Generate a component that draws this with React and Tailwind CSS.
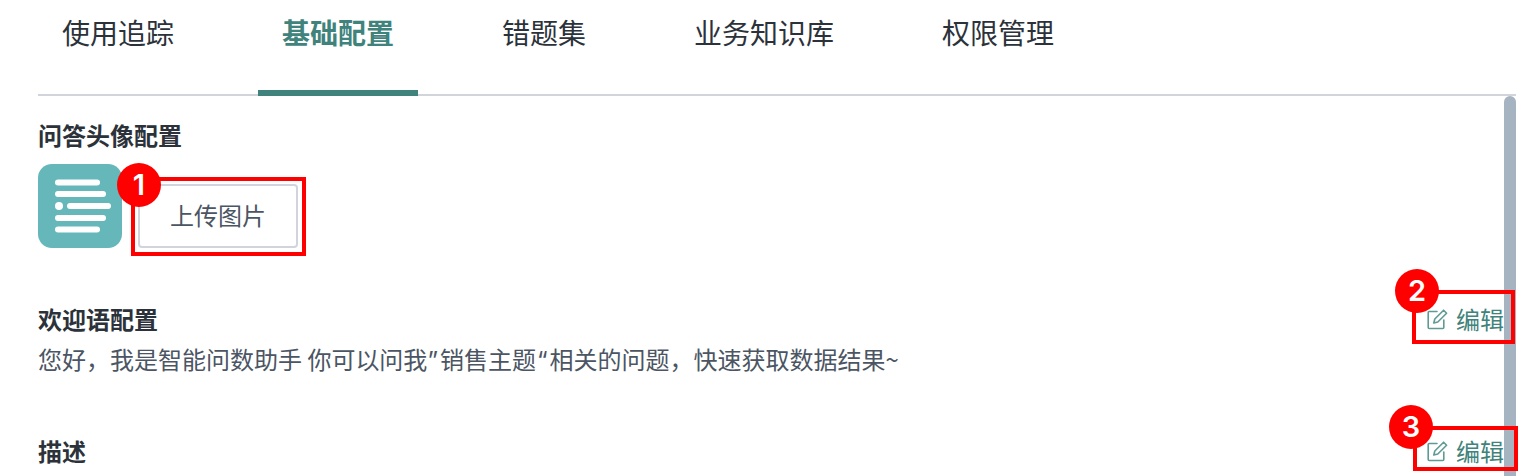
import React from "react";

const font = { fontFamily: '"Noto Sans CJK SC", "Liberation Sans", sans-serif' };
const latin = { fontFamily: '"Inter", sans-serif' };

function EditIcon() {
  return (
    <svg width="21" height="21" viewBox="0 0 21 21" fill="none" stroke="#5f9a94" strokeWidth="1.6" strokeLinecap="round" strokeLinejoin="round">
      <path d="M10 2.5H2.2a1 1 0 0 0-1 1v15a1 1 0 0 0 1 1h13.6a1 1 0 0 0 1-1V11" />
      <path d="M16.6 1.2l3 3L10.8 13l-4 1 1-4z" />
    </svg>
  );
}

function Edit() {
  return (
    <div className="flex items-center gap-[8px] pr-[12px] text-[24px] leading-[36px] text-[#3f837c]">
      <EditIcon />
      <span>编辑</span>
    </div>
  );
}

function Badge({ n, className }) {
  return (
    <div className={"absolute w-[44px] h-[44px] rounded-full bg-[#ff0000] text-white flex items-center justify-center text-[29px] font-semibold " + className} style={latin}>
      {n}
    </div>
  );
}

const tabs = [
  ["使用追踪", false],
  ["基础配置", true],
  ["错题集", false],
  ["业务知识库", false],
  ["权限管理", false],
];

export default function App() {
  return (
    <div className="relative w-[1530px] h-[476px] overflow-hidden bg-white text-[#2c323a]" style={font}>
      <div className="mx-[38px] w-[1478px] h-[96px] flex gap-[60px] border-b-2 border-[#d1d5db]">
        {tabs.map(([t, a]) => (
          <div
            key={t}
            className={
              "px-[24px] h-[96px] pt-[12px] text-[28px] leading-[40px] border-b-[6px] " +
              (a ? "font-bold text-[#3f837c] border-[#3f837c]" : "border-transparent text-[#2c323a]")
            }
          >
            {t}
          </div>
        ))}
      </div>

      <div className="relative h-[380px] overflow-hidden pl-[38px] pr-[14px]">
        <div className="absolute right-[14px] top-0 bottom-0 w-[12px] rounded-t-full bg-[#a6b4c1]" />

        <h3 className="relative pt-[21px] text-[24px] leading-[36px] font-bold">问答头像配置</h3>
        <div className="relative mt-[11px] flex items-start gap-[16px]">
          <div className="w-[84px] h-[84px] rounded-[14px] bg-[#65b7ba] shrink-0">
            <svg width="84" height="84" viewBox="0 0 84 84" fill="none" stroke="#ffffff" strokeWidth="6" strokeLinecap="round">
              <path d="M20 18.5H59" />
              <path d="M20 30H65" />
              <circle cx="21" cy="42" r="4" fill="#ffffff" stroke="none" />
              <path d="M32 42H70" />
              <path d="M20 54H65" />
              <path d="M20 65.5H59" />
            </svg>
          </div>
          <div className="mt-[20px] w-[160px] h-[64px] rounded-[4px] border-2 border-[#d1d5db] flex items-center justify-center pb-[3px] text-[24px] text-[#4b5563]">
            上传图片
          </div>
        </div>

        <div className="relative mt-[51px] flex items-center justify-between h-[40px]">
          <h3 className="text-[24px] leading-[36px] font-bold">欢迎语配置</h3>
          <Edit />
        </div>
        <p className="relative text-[24px] leading-[36px] mt-[2px] text-[#4b5563]">
          您好，我是智能问数助手 你可以问我<span className="mr-[2px]" style={latin}>”</span>销售主题<span className="ml-[1px] mr-[2px]" style={latin}>“</span>相关的问题，快速获取数据结果~
        </p>

        <div className="relative mt-[52px] flex items-center justify-between h-[40px]">
          <h3 className="text-[24px] leading-[36px] font-bold">描述</h3>
          <Edit />
        </div>
      </div>

      {/* Annotation overlays */}
      <div className="absolute left-[131px] top-[177px] w-[175px] h-[79px] border-[4px] border-[#ff0000]" />
      <div className="absolute left-[1412px] top-[290px] w-[103px] h-[54px] border-[4px] border-[#ff0000]" />
      <div className="absolute left-[1413px] top-[426px] w-[105px] h-[45px] border-[4px] border-[#ff0000]" />
      <Badge n="1" className="left-[117px] top-[163px]" />
      <Badge n="2" className="left-[1395px] top-[269px]" />
      <Badge n="3" className="left-[1389px] top-[405px]" />
    </div>
  );
}
